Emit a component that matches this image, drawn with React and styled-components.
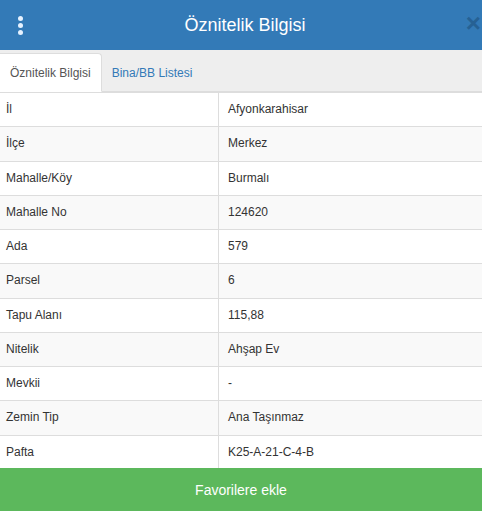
import React from 'react';
import styled, { createGlobalStyle } from 'styled-components';

const Global = createGlobalStyle`
  html, body { margin:0; padding:0; background:#fff; }
  body {
    font-family:"Liberation Sans", Arial, sans-serif;
    font-size:12px;
    color:#333;
    overflow:hidden;
  }
`;

const Panel = styled.div`
  width:482px;
  height:511px;
  display:flex;
  flex-direction:column;
  overflow:hidden;
`;

const Header = styled.div`
  height:50px;
  flex:0 0 50px;
  background:#337ab7;
  display:flex;
  align-items:center;
  justify-content:center;
  position:relative;
  overflow:hidden;
`;

const Title = styled.h1`
  margin:0;
  font-size:18px;
  font-weight:400;
  color:#fff;
  padding-left:8px;
`;

const MenuDots = styled.div`
  position:absolute;
  left:18px;
  top:16px;
  display:flex;
  flex-direction:column;
  gap:2px;
  span {
    width:5px;
    height:5px;
    border-radius:50%;
    background:#e6f2ff;
  }
`;

const Close = styled.div`
  position:absolute;
  right:1px;
  top:10px;
  font-size:26px;
  font-weight:700;
  color:#1d4d78;
  opacity:.55;
  line-height:1;
`;

const Tabs = styled.ul`
  margin:0;
  padding:3px 0 0;
  list-style:none;
  display:flex;
  background:#eee;
  border-bottom:1px solid #ddd;
  height:38px;
`;

const Tab = styled.li`
  margin-bottom:-1px;
  padding:0 10px;
  display:flex;
  align-items:center;
  font-size:12px;
  color:${p => p.active ? '#555' : '#337ab7'};
  background:${p => p.active ? '#fff' : 'transparent'};
  border:1px solid ${p => p.active ? '#ddd' : 'transparent'};
  border-bottom-color:${p => p.active ? '#fff' : 'transparent'};
  border-left:none;
  border-radius:0 4px 0 0;
`;

const Body = styled.div`
  flex:1;
  overflow:hidden;
`;

const Table = styled.table`
  width:100%;
  border-collapse:collapse;
`;

const Row = styled.tr`
  background:${p => p.striped ? '#f9f9f9' : '#fff'};
  td {
    line-height:1.44;
    padding:8px 9px;
    border-top:1px solid #ddd;
    vertical-align:top;
  }
  td:first-child {
    width:203px;
    padding-left:6px;
    border-right:1px solid #ddd;
  }
`;

const AddButton = styled.button`
  flex:0 0 43px;
  height:43px;
  border:none;
  background:#5cb85c;
  color:#fff;
  font-family:inherit;
  font-size:14px;
  padding:0;
`;

const rows = [
  ['İl', 'Afyonkarahisar'],
  ['İlçe', 'Merkez'],
  ['Mahalle/Köy', 'Burmalı'],
  ['Mahalle No', '124620'],
  ['Ada', '579'],
  ['Parsel', '6'],
  ['Tapu Alanı', '115,88'],
  ['Nitelik', 'Ahşap Ev'],
  ['Mevkii', '-'],
  ['Zemin Tip', 'Ana Taşınmaz'],
  ['Pafta', 'K25-A-21-C-4-B'],
];

export default function App() {
  return (
    <Panel>
      <Global />
      <Header>
        <MenuDots><span /><span /><span /></MenuDots>
        <Title>Öznitelik Bilgisi</Title>
        <Close>×</Close>
      </Header>
      <Tabs>
        <Tab active>Öznitelik Bilgisi</Tab>
        <Tab>Bina/BB Listesi</Tab>
      </Tabs>
      <Body>
        <Table>
          <tbody>
            {rows.map(([k, v], i) => (
              <Row key={k} striped={i % 2 === 1}>
                <td>{k}</td>
                <td>{v}</td>
              </Row>
            ))}
          </tbody>
        </Table>
      </Body>
      <AddButton>Favorilere ekle</AddButton>
    </Panel>
  );
}
